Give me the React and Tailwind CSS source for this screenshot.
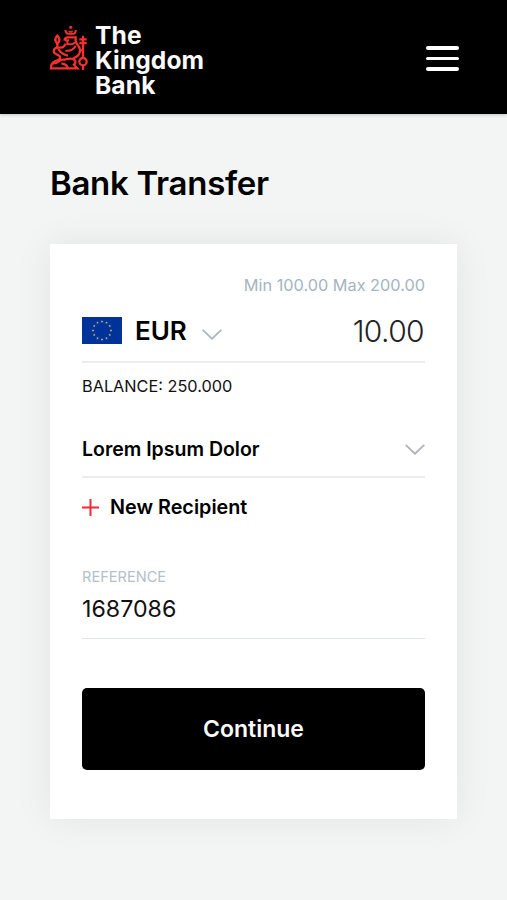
import React from 'react';

const STARS = Array.from({ length: 12 }, (_, i) => {
  const angle = (i * Math.PI) / 6;
  return { x: 20 + 9 * Math.sin(angle), y: 13.5 - 9 * Math.cos(angle) };
});

const LionMark = () => (
  <svg className="h-[50px] w-[42px] shrink-0" viewBox="0 0 126 150" fill="none" stroke="#f5302f" strokeWidth="7">
    {/* crown */}
    <circle cx="68" cy="13" r="4.5" fill="#f5302f" stroke="none" />
    <path d="M52 21 C53 28 55 31 59 32 H77 C81 31 83 28 84 21" strokeWidth="6" />
    <path d="M62 24 C66 28 70 28 74 24" strokeWidth="4" />
    {/* head and mane */}
    <path d="M49 53 C50 46 54 43 60 43 H83 V54 C83 63 96 67 96 82 C96 96 86 103 75 106" />
    <path d="M51 52 H63 M58 52 V64 H72 L82 58" strokeWidth="6" />
    <path d="M83 68 C76 80 65 85 52 83" strokeWidth="6" />
    {/* left paw and scepter */}
    <path d="M28 38 C20 46 20 54 28 62 C36 54 36 46 28 38 Z" />
    <path d="M28 62 V74 H38 C46 74 50 68 53 62" />
    <path d="M28 74 C14 77 14 90 26 94 C36 97 40 105 32 110 C18 115 9 118 9 133 V136 H58" />
    <path d="M31 78 C38 91 47 95 60 98" />
    {/* hind legs */}
    <path d="M12 122 C34 122 31 110 44 110 C58 109 67 104 77 109 C86 114 82 122 78 125 L88 136 H60 C57 127 50 122 40 122" />
    {/* staff */}
    <path d="M105 38 V104 M105 127 V141 M94 49 H116 M94 60 H116 M94 82 H105" />
    <circle cx="105" cy="116" r="11" />
  </svg>
);

const EuFlag = () => (
  <svg className="h-[27px] w-[40px] shrink-0" viewBox="0 0 40 27">
    <rect width="40" height="27" fill="#003399" />
    {STARS.map((s, i) => (
      <polygon
        key={i}
        transform={`translate(${s.x} ${s.y}) scale(1.4)`}
        points="0,-1 .24,-.32 .95,-.31 .38,.12 .59,.81 0,.4 -.59,.81 -.38,.12 -.95,-.31 -.24,-.32"
        fill="#cfc070"
      />
    ))}
  </svg>
);

const Chevron = ({ className }) => (
  <svg className={className} viewBox="0 0 20 11" fill="none" stroke="currentColor" strokeWidth="1.7">
    <path d="M.7 .8 L10 9.7 L19.3 .8" />
  </svg>
);

const App = () => {
  return (
    <div className="h-[900px] w-full overflow-hidden bg-[#f3f5f5] font-['Inter',sans-serif] text-black">
      <header className="flex h-[114px] items-start justify-between bg-black pr-12 pl-12 shadow-[0_1px_3px_rgba(0,0,0,0.2)]">
        <div className="flex pt-[23px]">
          <LionMark />
          <p className="ml-[5px] text-[24.6px] leading-[25px] font-bold tracking-[0.1px] text-[#fafafa]">
            The
            <br />
            Kingdom
            <br />
            Bank
          </p>
        </div>
        <button aria-label="Menu" className="mt-[46px] flex w-[33px] flex-col gap-[7px]">
          <span className="h-[3.5px] w-full rounded-full bg-white" />
          <span className="h-[3.5px] w-full rounded-full bg-white" />
          <span className="h-[3.5px] w-full rounded-full bg-white" />
        </button>
      </header>

      <main className="px-[50px]">
        <h1 className="pt-[49px] text-[33px] leading-10 font-semibold tracking-[-0.3px] whitespace-nowrap">Bank Transfer</h1>

        <section className="mt-[41px] h-[575px] bg-white px-8 pt-[31px] shadow-[0_0_36px_rgba(0,0,0,0.07)]">
          <div className="text-right text-[16.3px] leading-5 text-[#a5b4bf]">Min 100.00 Max 200.00</div>

          <div className="flex h-[68px] items-center justify-between border-b-2 border-[#ebedee] pt-[5px]">
            <div className="flex items-center">
              <EuFlag />
              <span className="ml-[13px] text-[26px] leading-8 font-semibold">EUR</span>
              <Chevron className="mt-[7px] ml-[15px] h-[11px] w-5 text-[#a9b8c1]" />
            </div>
            <span className="pr-[1px] text-[30px] leading-9 font-light tracking-[-0.6px] text-[#222]">10.00</span>
          </div>

          <div className="mt-[13px] text-[16.3px] leading-5 text-[#111]">BALANCE: 250.000</div>

          <div className="mt-[28px] flex h-[54px] items-center justify-between border-b-2 border-[#ebedee] pb-[3px]">
            <span className="text-[19.5px] leading-6 font-semibold">Lorem Ipsum Dolor</span>
            <Chevron className="mt-[2px] h-[11px] w-5 text-[#adb2bb]" />
          </div>

          <button className="mt-[17px] flex h-6 items-center">
            <svg className="h-[17px] w-[17px]" viewBox="0 0 17 17" stroke="#ef2b35" strokeWidth="2">
              <path d="M8.5 0 V17 M0 8.5 H17" />
            </svg>
            <span className="ml-[11px] text-[19.8px] leading-6 font-semibold">New Recipient</span>
          </button>

          <div className="mt-[48px] border-b-[1.5px] border-[#e1e6e9] pb-[15px]">
            <div className="text-[14.6px] leading-5 text-[#b3c0c8]">REFERENCE</div>
            <div className="mt-[8px] text-[23.2px] leading-7 text-[#111]">1687086</div>
          </div>

          <button className="mt-[49px] flex h-[82px] w-full items-center justify-center rounded-[5px] bg-black text-[23px] font-semibold text-[#fafafa]">
            Continue
          </button>
        </section>
      </main>
    </div>
  );
};

export default App;
